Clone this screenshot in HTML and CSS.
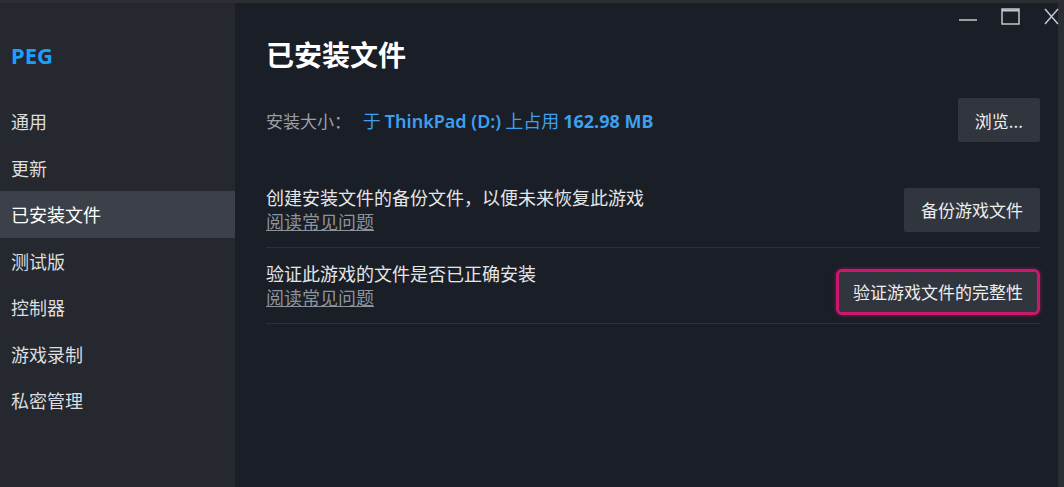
FILE: index.html
```html
<!DOCTYPE html>
<html lang="zh-CN">
<head>
  <meta charset="UTF-8" />
  <title>PEG - 已安装文件</title>
  <link rel="stylesheet" href="styles.css">
</head>
<body>
  <div class="window">
    <aside class="sidebar">
      <div class="game-name">PEG</div>
      <nav class="nav">
        <div class="nav-item">通用</div>
        <div class="nav-item">更新</div>
        <div class="nav-item active">已安装文件</div>
        <div class="nav-item">测试版</div>
        <div class="nav-item">控制器</div>
        <div class="nav-item">游戏录制</div>
        <div class="nav-item">私密管理</div>
      </nav>
    </aside>

    <main class="content">
      <div class="win-controls">
        <svg width="18" height="16" viewBox="0 0 18 16"><line x1="0" y1="11" x2="18" y2="11" stroke="#c4c7cb" stroke-width="1.5"/></svg>
        <svg width="19" height="17" viewBox="0 0 19 17"><rect x="1" y="1" width="17" height="15" fill="none" stroke="#c4c7cb" stroke-width="1.5"/><line x1="1" y1="2.5" x2="18" y2="2.5" stroke="#c4c7cb" stroke-width="2"/></svg>
        <svg width="15" height="17" viewBox="0 0 15 17"><path d="M1 1 L14 16 M14 1 L1 16" stroke="#c4c7cb" stroke-width="1.5"/></svg>
      </div>

      <h1 class="title">已安装文件</h1>

      <div class="row row-size">
        <div class="size-text">
          <span class="label">安装大小：</span>
          <span class="value">于 <b class="semi">ThinkPad (D:)</b> 上占用 <b>162.98 MB</b></span>
        </div>
        <button class="btn">浏览...</button>
      </div>

      <div class="row row-bordered">
        <div class="row-text">
          <div class="row-title">创建安装文件的备份文件，以便未来恢复此游戏</div>
          <a class="faq">阅读常见问题</a>
        </div>
        <button class="btn">备份游戏文件</button>
      </div>

      <div class="row row-bordered">
        <div class="row-text">
          <div class="row-title">验证此游戏的文件是否已正确安装</div>
          <a class="faq">阅读常见问题</a>
        </div>
        <button class="btn highlight">验证游戏文件的完整性</button>
      </div>
    </main>
  </div>
</body>
</html>
```

FILE: styles.css
```css
html, body {
  margin: 0;
  padding: 0;
  height: 100%;
}
body {
  font-family: "Noto Sans", "Noto Sans CJK SC", sans-serif;
  background: #1a1e27;
  border-top: 3px solid #2c2e31;
  box-sizing: border-box;
  overflow: hidden;
}
.window {
  display: flex;
  height: 484px;
  border-right: 6px solid #2a2d33;
}
.sidebar {
  width: 235px;
  flex-shrink: 0;
  background: #25282e;
}
.game-name {
  color: #1a9fff;
  font-weight: 700;
  font-size: 22px;
  line-height: 28px;
  padding: 38px 0 0 11px;
}
.nav {
  margin-top: 29px;
}
.nav-item {
  height: 46.5px;
  line-height: 46.5px;
  padding-left: 11px;
  font-size: 18px;
  color: #dcdedf;
  font-family: "Noto Sans CJK SC", sans-serif;
}
.nav-item.active {
  background: #3c4049;
  color: #ffffff;
}
.content {
  flex: 1;
  position: relative;
  padding: 33px 18px 0 31px;
  font-family: "Noto Sans CJK SC", sans-serif;
}
.win-controls {
  position: absolute;
  top: 5px;
  right: -1px;
  display: flex;
  align-items: center;
  gap: 24px;
}
.title {
  margin: 0;
  font-size: 28px;
  line-height: 36px;
  font-weight: 700;
  color: #ffffff;
}
.row {
  display: flex;
  align-items: center;
  justify-content: space-between;
}
.row-size {
  margin-top: 26px;
  margin-bottom: 30px;
}
.size-text {
  font-size: 17px;
}
.label {
  color: #9ba0a7;
  margin-right: 8px;
}
.value {
  color: #3d9ff0;
  font-size: 18px;
}
.value b {
  font-weight: 700;
  font-family: "Noto Sans", "Noto Sans CJK SC", sans-serif;
}
.value b.semi {
  font-weight: 600;
}
.row-bordered {
  padding: 13px 0;
  border-bottom: 1px solid #2b303b;
}
.row-title {
  font-size: 18px;
  line-height: 24px;
  color: #e4e6e8;
}
.faq {
  display: inline-block;
  font-size: 18px;
  line-height: 24px;
  color: #8d939b;
  text-decoration: underline;
}
.btn {
  font-family: "Noto Sans CJK SC", sans-serif;
  background: #31353d;
  color: #eceef0;
  border: none;
  border-radius: 2px;
  font-size: 17px;
  height: 44px;
  padding: 0 17px;
  cursor: pointer;
}
.btn.highlight {
  border: 3px solid #c8196e;
  border-radius: 6px;
  padding: 0 14px;
  height: 46px;
  margin-top: 6px;
  margin-bottom: -6px;
  box-shadow: 0 0 4px rgba(200, 25, 110, 0.6);
}
```
